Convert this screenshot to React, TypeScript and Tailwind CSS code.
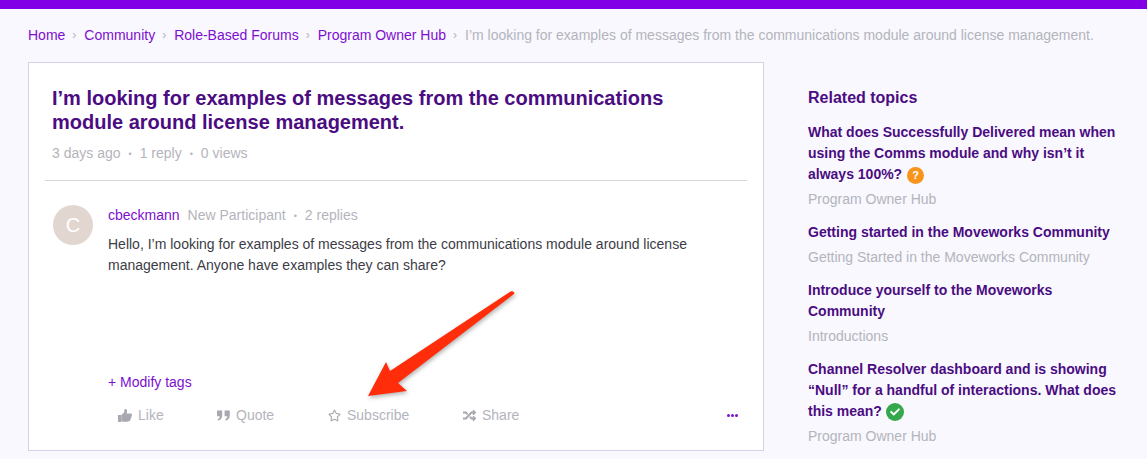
import { Fragment } from "react";
import { FaRegStar, FaRandom, FaCheck } from "react-icons/fa";

const crumbs = ["Home", "Community", "Role-Based Forums", "Program Owner Hub"];

function ThumbIcon() {
    return (
        <svg width="14" height="13" viewBox="0 0 14 13" fill="currentColor">
            <path d="M0 6h3.4v7H0z" />
            <path d="M3.4 6 6 3.4 6.6 .6C6.7 .1 7.2 0 7.7 .1 8.9 .4 9.3 1.6 9 2.8L8.6 4.6H12.6C13.5 4.6 14 5.2 14 6 14 6.5 13.8 6.9 13.5 7.1 13.7 7.9 13.4 8.5 13 8.8 13.1 9.6 12.8 10.2 12.3 10.5 12.4 11.6 11.8 12.3 10.8 12.3 8.3 13 5.8 13 3.4 12.2Z" />
        </svg>
    );
}

function QuoteIcon() {
    return (
        <svg width="13" height="11" viewBox="0 0 13 11" fill="currentColor">
            <path d="M0 0.4H5.2V5.2C5.2 8 3.6 9.9 1.2 10.6L0.6 9.2C1.9 8.6 2.7 7.6 2.8 6.2H0Z" />
            <path d="M7.6 0.4H12.8V5.2C12.8 8 11.2 9.9 8.8 10.6L8.2 9.2C9.5 8.6 10.3 7.6 10.4 6.2H7.6Z" />
        </svg>
    );
}

const actions = [
    { label: "Like", icon: <ThumbIcon />, width: "w-[109px]", pad: "pl-[10px]" },
    { label: "Quote", icon: <QuoteIcon />, width: "w-[111px]", pad: "" },
    { label: "Subscribe", icon: <FaRegStar size={13} />, width: "w-[135px]", pad: "" },
    { label: "Share", icon: <FaRandom size={13} />, width: "w-[100px]", pad: "" },
];

function Badge({ kind }: { kind: "question" | "solved" }) {
    if (kind === "question") {
        return (
            <span className="inline-flex w-[17px] h-[17px] ml-[5px] rounded-full bg-[#f7941d] text-white text-[11px] items-center justify-center align-middle">?</span>
        );
    }
    return (
        <span className="inline-flex w-[18px] h-[18px] ml-[4px] rounded-full bg-[#34a84a] text-white items-center justify-center align-middle">
            <FaCheck size={10} />
        </span>
    );
}

function Topic({ title, hub, badge }: { title: string; hub: string; badge?: "question" | "solved" }) {
    return (
        <div className="mb-[12px]">
            <p className="text-[14px] leading-[21px] font-bold text-[#4b0c82]">
                {title}
                {badge && <Badge kind={badge} />}
            </p>
            <p className="text-[14px] leading-[21px] mt-[4px] text-[#b4b4bc]">{hub}</p>
        </div>
    );
}

function Dot() {
    return <span className="mx-[8px] text-[9px] align-[1px]">•</span>;
}

export default function App() {
    return (
        <div className="relative w-[1147px] h-[459px] overflow-hidden bg-[#f8f8fe] font-['Liberation_Sans',Arial,sans-serif]">
            <div className="h-[9px] bg-[#8200e6]"></div>

            <nav className="flex items-center h-[53px] pl-[28px] pb-[1px] text-[14px] whitespace-nowrap">
                {crumbs.map((c) => (
                    <Fragment key={c}>
                        <a className="text-[#7d0fd0]">{c}</a>
                        <span className="ml-[7px] mr-[8px] text-[#b4b4bc] text-[12px]">›</span>
                    </Fragment>
                ))}
                <span className="text-[#b4b4bc]">I’m looking for examples of messages from the communications module around license management.</span>
            </nav>

            <div className="flex items-start pl-[28px]">
                <main className="w-[736px] h-[389px] shrink-0 flex flex-col bg-white border border-[#d9cfe6] px-[16px]">
                    <div className="pl-[7px] pr-[8px] pt-[23px] pb-[15px] border-b border-[#d8d8dc]">
                        <h1 className="text-[20px] leading-[24px] font-bold text-[#4b0c82]">
                            I’m looking for examples of messages from the communications<br />module around license management.
                        </h1>
                        <p className="mt-[9px] text-[14px] leading-[21px] text-[#b4b4bc]">3 days ago<Dot />1 reply<Dot />0 views</p>
                    </div>

                    <div className="flex flex-1 px-[8px] pt-[24px]">
                        <div className="w-[40px] h-[40px] shrink-0 rounded-full bg-[#e2d6d0] text-white text-[20px] flex items-center justify-center">C</div>
                        <div className="ml-[15px] flex-1 flex flex-col">
                            <p className="text-[14px] leading-[21px]">
                                <a className="text-[#7d0fd0]">cbeckmann</a>
                                <span className="ml-[8px] text-[#b4b4bc]">New Participant<Dot />2 replies</span>
                            </p>
                            <p className="mt-[7px] text-[14px] leading-[21px] text-[#3c3c46]">
                                Hello, I’m looking for examples of messages from the communications module around license<br />management. Anyone have examples they can share?
                            </p>
                            <a className="mt-[96px] text-[14px] leading-[21px] text-[#7d0fd0]">+ Modify tags</a>
                            <div className="flex items-center mt-[12px] h-[21px] text-[14px] text-[#b4b4bc]">
                                {actions.map((a) => (
                                    <div key={a.label} className={`flex items-center gap-[6px] ${a.width} ${a.pad}`}>
                                        <span className="text-[#a8a8b0]">{a.icon}</span>
                                        <span>{a.label}</span>
                                    </div>
                                ))}
                                <div className="ml-auto mr-[1px] flex gap-[1px]">
                                    <span className="w-[3px] h-[3px] rounded-full bg-[#7d0fd0]"></span>
                                    <span className="w-[3px] h-[3px] rounded-full bg-[#7d0fd0]"></span>
                                    <span className="w-[3px] h-[3px] rounded-full bg-[#7d0fd0]"></span>
                                </div>
                            </div>
                        </div>
                    </div>
                </main>

                <aside className="ml-[44px] w-[310px] pt-[24px]">
                    <h2 className="text-[16px] leading-[24px] font-bold text-[#4b0c82] mb-[12px]">Related topics</h2>
                    <Topic title="What does Successfully Delivered mean when using the Comms module and why isn’t it always 100%?" hub="Program Owner Hub" badge="question" />
                    <Topic title="Getting started in the Moveworks Community" hub="Getting Started in the Moveworks Community" />
                    <Topic title="Introduce yourself to the Moveworks Community" hub="Introductions" />
                    <Topic title="Channel Resolver dashboard and is showing “Null” for a handful of interactions. What does this mean?" hub="Program Owner Hub" badge="solved" />
                </aside>
            </div>

            {/* annotation arrow on top of the screenshot */}
            <svg className="absolute left-0 top-0 pointer-events-none drop-shadow-[1px_2px_2px_rgba(0,0,0,0.3)]" width="1147" height="459">
                <path d="M513 291.5 Q515 292.5 514 294 L398 383 L407 391 L368 396 L386 362 L390 371 L510.5 291.5 Q512 291 513 291.5 Z" fill="#ff2d0a" />
            </svg>
        </div>
    );
}
